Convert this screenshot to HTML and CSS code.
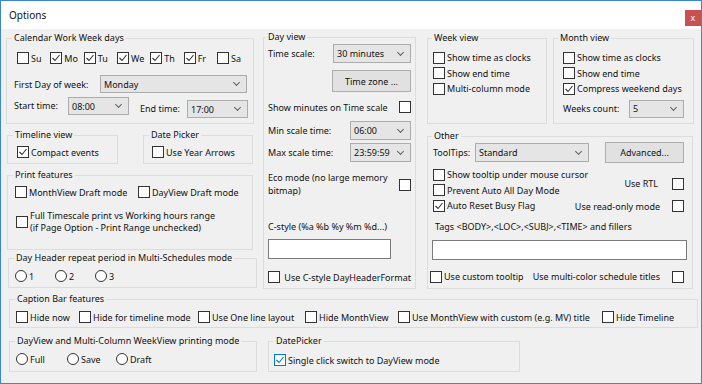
FILE: index.html
```html
<!DOCTYPE html>
<html lang="en">
<head>
  <meta charset="UTF-8">
  <title>Options</title>
  <link rel="stylesheet" href="styles.css">
</head>
<body>
<div class="window">
  <div class="titlebar">
    <span class="title">Options</span>
    <span class="close">x</span>
  </div>

  <div class="client">
    <div class="top">

      <!-- left column -->
      <div class="col-left">
        <fieldset class="group calendar">
          <legend>Calendar Work Week days</legend>
          <div class="days">
            <span class="chk"><span class="box"></span>Su</span>
            <span class="chk"><span class="box"><svg viewBox="0 0 10 10"><polyline points="1.5,5 4,7.5 8.5,2"/></svg></span>Mo</span>
            <span class="chk"><span class="box"><svg viewBox="0 0 10 10"><polyline points="1.5,5 4,7.5 8.5,2"/></svg></span>Tu</span>
            <span class="chk"><span class="box"><svg viewBox="0 0 10 10"><polyline points="1.5,5 4,7.5 8.5,2"/></svg></span>We</span>
            <span class="chk"><span class="box"><svg viewBox="0 0 10 10"><polyline points="1.5,5 4,7.5 8.5,2"/></svg></span>Th</span>
            <span class="chk"><span class="box"><svg viewBox="0 0 10 10"><polyline points="1.5,5 4,7.5 8.5,2"/></svg></span>Fr</span>
            <span class="chk"><span class="box"></span>Sa</span>
          </div>
          <div class="row first-day">
            <span class="lbl">First Day of week:</span>
            <span class="combo">Monday</span>
          </div>
          <div class="row times">
            <span class="lbl start-lbl">Start time:</span>
            <span class="combo time">08:00</span>
            <span class="lbl end-lbl">End time:</span>
            <span class="combo time end">17:00</span>
          </div>
        </fieldset>

        <div class="pair">
          <fieldset class="group timeline">
            <legend>Timeline view</legend>
            <span class="chk"><span class="box"><svg viewBox="0 0 10 10"><polyline points="1.5,5 4,7.5 8.5,2"/></svg></span>Compact events</span>
          </fieldset>
          <fieldset class="group datepicker-top">
            <legend>Date Picker</legend>
            <span class="chk"><span class="box"></span>Use Year Arrows</span>
          </fieldset>
        </div>

        <fieldset class="group print">
          <legend>Print features</legend>
          <div class="row print-row">
            <span class="chk month-draft"><span class="box"></span>MonthView Draft mode</span>
            <span class="chk"><span class="box"></span>DayView Draft mode</span>
          </div>
          <div class="chk wrap">
            <span class="box"></span>
            <span>Full Timescale print vs Working hours range<br>(if Page Option - Print Range unchecked)</span>
          </div>
        </fieldset>

        <fieldset class="group dayheader">
          <legend>Day Header repeat period in Multi-Schedules mode</legend>
          <div class="row radios">
            <span class="rad"><span class="radio"></span>1</span>
            <span class="rad"><span class="radio"></span>2</span>
            <span class="rad"><span class="radio"></span>3</span>
          </div>
        </fieldset>
      </div>

      <!-- day view -->
      <fieldset class="group dayview">
        <legend>Day view</legend>
        <div class="row dv-scale">
          <span>Time scale:</span>
          <span class="combo scale">30 minutes</span>
        </div>
        <div class="row dv-zone">
          <span class="button zone">Time zone ...</span>
        </div>
        <div class="row dv-minutes">
          <span>Show minutes on Time scale</span>
          <span class="box"></span>
        </div>
        <div class="row dv-min">
          <span>Min scale time:</span>
          <span class="combo scale-time">06:00</span>
        </div>
        <div class="row dv-max">
          <span>Max scale time:</span>
          <span class="combo scale-time">23:59:59</span>
        </div>
        <div class="row dv-eco">
          <span>Eco mode (no large memory<br>bitmap)</span>
          <span class="box"></span>
        </div>
        <div class="dv-cstyle">C-style (%a %b %y %m %d...)</div>
        <div class="edit dv-edit"></div>
        <span class="chk dv-use"><span class="box"></span>Use C-style DayHeaderFormat</span>
      </fieldset>

      <!-- right column -->
      <div class="col-right">
        <div class="pair">
          <fieldset class="group weekview">
            <legend>Week view</legend>
            <div class="list">
              <span class="chk"><span class="box"></span>Show time as clocks</span>
              <span class="chk"><span class="box"></span>Show end time</span>
              <span class="chk"><span class="box"></span>Multi-column mode</span>
            </div>
          </fieldset>
          <fieldset class="group monthview">
            <legend>Month view</legend>
            <div class="list">
              <span class="chk"><span class="box"></span>Show time as clocks</span>
              <span class="chk"><span class="box"></span>Show end time</span>
              <span class="chk"><span class="box"><svg viewBox="0 0 10 10"><polyline points="1.5,5 4,7.5 8.5,2"/></svg></span>Compress weekend days</span>
            </div>
            <div class="row weeks">
              <span class="weeks-lbl">Weeks count:</span>
              <span class="combo weeks-combo">5</span>
            </div>
          </fieldset>
        </div>

        <fieldset class="group other">
          <legend>Other</legend>
          <div class="row tips">
            <span class="tips-lbl">ToolTips:</span>
            <span class="combo tips-combo">Standard</span>
            <span class="button advanced">Advanced...</span>
          </div>
          <div class="other-mid">
            <div class="list">
              <span class="chk"><span class="box"></span>Show tooltip under mouse cursor</span>
              <span class="chk"><span class="box"></span>Prevent Auto All Day Mode</span>
              <span class="chk"><span class="box"><svg viewBox="0 0 10 10"><polyline points="1.5,5 4,7.5 8.5,2"/></svg></span>Auto Reset Busy Flag</span>
            </div>
            <div class="right-opts">
              <span class="row opt rtl">Use RTL<span class="box"></span></span>
              <span class="row opt readonly">Use read-only mode<span class="box"></span></span>
            </div>
          </div>
          <div class="tags">Tags &lt;BODY&gt;,&lt;LOC&gt;,&lt;SUBJ&gt;,&lt;TIME&gt; and fillers</div>
          <div class="edit tags-edit"></div>
          <div class="row other-bottom">
            <span class="chk"><span class="box"></span>Use custom tooltip</span>
            <span class="row opt">Use multi-color schedule titles<span class="box"></span></span>
          </div>
        </fieldset>
      </div>
    </div>

    <fieldset class="group caption">
      <legend>Caption Bar features</legend>
      <div class="row caption-row">
        <span class="chk c1"><span class="box"></span>Hide now</span>
        <span class="chk c2"><span class="box"></span>Hide for timeline mode</span>
        <span class="chk c3"><span class="box"></span>Use One line layout</span>
        <span class="chk c4"><span class="box"></span>Hide MonthView</span>
        <span class="chk c5"><span class="box"></span>Use MonthView with custom (e.g. MV) title</span>
        <span class="chk"><span class="box"></span>Hide Timeline</span>
      </div>
    </fieldset>

    <div class="bottom">
      <fieldset class="group printmode">
        <legend>DayView and Multi-Column WeekView printing mode</legend>
        <div class="row radios">
          <span class="rad full"><span class="radio"></span>Full</span>
          <span class="rad save"><span class="radio"></span>Save</span>
          <span class="rad"><span class="radio"></span>Draft</span>
        </div>
      </fieldset>
      <fieldset class="group datepicker">
        <legend>DatePicker</legend>
        <span class="chk"><span class="box focus"><svg viewBox="0 0 10 10"><polyline points="1.5,5 4,7.5 8.5,2"/></svg></span>Single click switch to DayView mode</span>
      </fieldset>
    </div>
  </div>
</div>
</body>
</html>
```

FILE: styles.css
```css
body {
  margin: 0;
  font-family: 'Noto Sans', sans-serif;
  font-size: 9px;
  color: #111;
  background: #fff;
}

.window {
  width: 702px;
  height: 384px;
  box-sizing: border-box;
  border: 1px solid #3a87d4;
  background: #f0f0f0;
  display: flex;
  flex-direction: column;
}

.titlebar {
  height: 28px;
  flex: none;
  background: #fff;
  display: flex;
  align-items: flex-start;
  justify-content: space-between;
  padding-left: 8px;
}

.title {
  font-size: 10px;
  line-height: 14px;
  margin-top: 7px;
}

.close {
  width: 16px;
  height: 16px;
  margin-top: 9px;
  background: #c75050;
  color: #fff;
  font-size: 9px;
  line-height: 15px;
  text-align: center;
}

.client {
  flex: 1;
  padding: 1px 0 0 5px;
  display: flex;
  flex-direction: column;
}

.top {
  display: flex;
  align-items: flex-start;
  height: 259px;
}

/* group boxes */
.group {
  margin: 0;
  padding: 0;
  border: 1px solid #dcdcdc;
  box-sizing: border-box;
  min-width: 0;
}

.group legend {
  margin-left: 5px;
  padding: 0 2px;
  height: 14px;
  line-height: 14px;
}

.row {
  display: flex;
  align-items: center;
}

/* checkboxes, radios */
.chk, .rad {
  display: flex;
  align-items: center;
  height: 16px;
  white-space: nowrap;
}

.box, .radio {
  width: 12px;
  height: 12px;
  box-sizing: border-box;
  border: 1px solid #333;
  background: #fff;
  flex: none;
  display: flex;
}

.chk .box, .rad .radio {
  margin-right: 2px;
}

.radio {
  border-radius: 50%;
}

.box svg {
  width: 10px;
  height: 10px;
  fill: none;
  stroke: #333;
  stroke-width: 1.1;
}

.box.focus {
  border-color: #0078d7;
}

.box.focus svg {
  stroke: #0078d7;
}

/* inputs */
.combo {
  height: 18px;
  box-sizing: border-box;
  border: 1px solid #acacac;
  background: #e5e5e5;
  display: flex;
  align-items: center;
  justify-content: space-between;
  padding: 0 7px 0 3px;
  flex: none;
}

.combo::after {
  content: '';
  width: 4px;
  height: 4px;
  border-right: 1px solid #606060;
  border-bottom: 1px solid #606060;
  transform: rotate(45deg);
  margin-top: -3px;
}

.button {
  box-sizing: border-box;
  border: 1px solid #adadad;
  background: #e1e1e1;
  display: flex;
  align-items: center;
  justify-content: center;
  flex: none;
}

.edit {
  box-sizing: border-box;
  border: 1px solid #7a7a7a;
  background: #fff;
  height: 20px;
}

/* left column */
.col-left {
  width: 248px;
  margin-top: 1px;
  display: flex;
  flex-direction: column;
}

.calendar {
  height: 93px;
}

.days {
  display: grid;
  grid-template-columns: repeat(7, 33.33px);
  margin: 5px 0 0 10px;
}

.first-day {
  margin: 9px 0 0 7px;
  height: 18px;
}

.first-day .lbl {
  width: 86px;
}

.first-day .combo {
  width: 147px;
}

.times {
  margin: 4px 0 0 7px;
  height: 21px;
  align-items: flex-start;
}

.times .lbl {
  line-height: 18px;
}

.start-lbl {
  width: 54px;
}

.end-lbl {
  width: 47px;
  margin: 3px 0 0 11px;
}

.combo.time {
  width: 61px;
}

.combo.end {
  margin-top: 3px;
}

.pair {
  display: flex;
  justify-content: space-between;
}

.col-left .pair {
  margin-top: 4px;
}

.timeline {
  width: 111px;
  height: 36px;
  margin-left: 1px;
}

.timeline .chk {
  margin: 2px 0 0 9px;
}

.datepicker-top {
  width: 110px;
  height: 36px;
  margin-right: 1px;
}

.datepicker-top .chk {
  margin: 2px 0 0 8px;
}

.print {
  width: 246px;
  height: 82px;
  margin: 4px 0 0 1px;
}

.print-row {
  margin: 2px 0 0 7px;
  height: 16px;
}

.month-draft {
  width: 123px;
}

.chk.wrap {
  height: 24px;
  margin: 10px 0 0 8px;
  line-height: 12px;
}

.dayheader {
  width: 249px;
  height: 37px;
  margin: 1px 0 0 2px;
}

.dayheader .radios {
  margin: 3px 0 0 6px;
}

.dayheader .rad {
  width: 40px;
}

/* day view */
.dayview {
  width: 153px;
  height: 259px;
  margin-left: 9px;
}

.dayview legend {
  margin-left: 2px;
}

.dayview .row, .dv-cstyle, .dv-edit, .dv-use {
  margin-left: 4px;
  margin-right: 4px;
  justify-content: space-between;
}

.dv-scale {
  height: 19px;
}

.combo.scale {
  width: 78px;
  height: 19px;
}

.dv-zone {
  margin-top: 7px;
  justify-content: flex-end !important;
}

.button.zone {
  width: 79px;
  height: 22px;
}

.dv-minutes {
  margin-top: 7px;
  height: 16px;
}

.dv-min {
  margin-top: 6px;
  height: 19px;
}

.dv-max {
  margin-top: 3px;
  height: 19px;
}

.combo.scale-time {
  width: 61px;
  height: 19px;
}

.dv-eco {
  margin-top: 10px;
  height: 25px;
  line-height: 12.5px;
}

.dv-cstyle {
  margin-top: 23px;
  line-height: 14px;
}

.dv-edit {
  width: 123px;
  margin-top: 5px;
}

.dv-use {
  margin-top: 10px;
}

/* right column */
.col-right {
  width: 267px;
  margin: 1px 0 0 11px;
  display: flex;
  flex-direction: column;
}

.weekview legend, .monthview legend, .other legend {
  margin-left: 4px;
}

.weekview {
  width: 120px;
  height: 93px;
}

.monthview {
  width: 141px;
  height: 93px;
}

.list {
  display: flex;
  flex-direction: column;
  margin-top: 5px;
}

.list .chk {
  height: 15.5px;
}

.weekview .list {
  margin-left: 5px;
}

.monthview .list {
  margin-left: 9px;
}

.weeks {
  margin: 3px 0 0 9px;
  height: 18px;
}

.weeks-lbl {
  width: 66px;
}

.weeks-combo {
  width: 55px;
}

.other {
  width: 266px;
  height: 160px;
  margin-top: 5px;
}

.tips {
  margin: -1px 8px 0 5px;
  height: 21px;
}

.tips-lbl {
  width: 42px;
}

.tips-combo {
  width: 114px;
  height: 19px;
}

.button.advanced {
  width: 79px;
  height: 21px;
  margin-left: auto;
}

/* left list and right options share one cell, as the dialog controls overlap in x */
.other-mid {
  display: grid;
  margin: 4px 8px 0 5px;
}

.other-mid > * {
  grid-area: 1 / 1;
}

.other-mid .list {
  margin: 0;
  justify-self: start;
}

.right-opts {
  display: flex;
  flex-direction: column;
  align-items: flex-end;
  justify-self: end;
  align-self: start;
}

.opt {
  height: 16px;
  gap: 12px;
  white-space: nowrap;
}

.opt.rtl {
  margin-top: 8.5px;
  gap: 14px;
}

.opt.readonly {
  margin-top: 6.5px;
}

.tags {
  margin: 5.5px 0 0 7px;
  line-height: 14px;
}

.tags-edit {
  width: 255px;
  margin: 6px 0 0 4px;
}

.other-bottom {
  margin: 9px 8px 0 2px;
  height: 16px;
  justify-content: space-between;
}

/* caption bar */
.caption {
  width: 689px;
  height: 36px;
  margin: 3px 0 0 3px;
}

.caption-row {
  margin: 3px 0 0 6px;
}

.c1 { width: 63px; }
.c2 { width: 119px; }
.c3 { width: 107px; }
.c4 { width: 93px; }
.c5 { width: 204px; }

/* bottom row */
.bottom {
  display: flex;
  margin-top: 6px;
}

.printmode {
  width: 248px;
  height: 38px;
  margin-left: 3px;
}

.printmode .radios {
  margin: 3px 0 0 6px;
}

.rad.full { width: 51px; }
.rad.save { width: 49px; }

.datepicker {
  width: 252px;
  height: 38px;
  margin-left: 11px;
}

.datepicker .chk {
  margin: 4px 0 0 5px;
}
```
